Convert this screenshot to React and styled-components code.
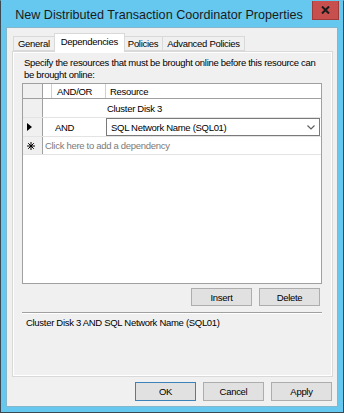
import React from "react";
import styled, { createGlobalStyle } from "styled-components";

const GlobalStyle = createGlobalStyle`
  html, body {
    margin: 0;
    padding: 0;
    background: #ffffff;
  }
  body {
    font-family: "Liberation Sans", Arial, sans-serif;
    font-size: 9.5px;
    letter-spacing: -0.3px;
    color: #000;
  }
`;

// ============ window frame ============

const Window = styled.div`
  box-sizing: border-box;
  width: 344px;
  height: 413px;
  display: flex;
  flex-direction: column;
  background-color: #66c8ef;
  border: 1px solid #3b4a52;
  border-top-color: #66c8ef;
  overflow: hidden;
`;

const TitleBar = styled.div`
  display: flex;
  align-items: flex-start;
  height: 26px;
  flex: none;
`;

const Title = styled.div`
  flex: 1;
  padding-left: 5px;
  text-align: center;
  font-size: 12.6px;
  letter-spacing: 0;
  line-height: 28px;
  color: #1b1b1b;
  white-space: nowrap;
`;

const CloseButton = styled.div`
  width: 27px;
  height: 20px;
  margin-right: 4px;
  margin-top: -1px;
  background-color: #c7504f;
  display: flex;
  align-items: center;
  justify-content: center;
  border: 1px solid #a23a39;
  border-top: none;
  box-sizing: border-box;
`;

const Client = styled.div`
  flex: 1;
  margin: 0 5px 5px;
  background-color: #f0f0f0;
  border: 1px solid #84b7cc;
  display: flex;
  flex-direction: column;
  padding: 5px 4px 0 5px;
`;

// ============ tabs ============

const TabStrip = styled.div`
  display: flex;
  align-items: flex-end;
  height: 18px;
  padding-left: 1px;
  position: relative;
  z-index: 1;
`;

const Tab = styled.div`
  box-sizing: border-box;
  height: ${(p) => (p.$active ? "19px" : "15px")};
  margin-bottom: ${(p) => (p.$active ? "-1px" : "0")};
  padding: ${(p) => (p.$active ? "2px 6px 0" : "1px 4px 0")};
  margin-left: ${(p) => (p.$active ? "-1px" : "0")};
  margin-right: ${(p) => (p.$active ? "-1px" : "0")};
  background-color: ${(p) => (p.$active ? "#ffffff" : "#f0f0f0")};
  border: 1px solid #d9d9d9;
  border-bottom: ${(p) => (p.$active ? "none" : "1px solid #d9d9d9")};
  border-left: ${(p) => (p.$first || p.$active ? "1px solid #d9d9d9" : "none")};
  line-height: 12px;
  white-space: nowrap;
  z-index: ${(p) => (p.$active ? 2 : 1)};
`;

const Panel = styled.div`
  box-sizing: border-box;
  height: 326px;
  border: 1px solid #d9d9d9;
  box-shadow: inset 1px 1px 0 #ffffff, inset -1px -1px 0 #ffffff;
  background-color: #f0f0f0;
  padding: 5px 10px 0 9px;
  display: flex;
  flex-direction: column;
`;

const Intro = styled.p`
  margin: 0 0 0 2px;
  line-height: 12px;
`;

// ============ grid ============

const Grid = styled.div`
  box-sizing: border-box;
  height: 201px;
  margin-top: 2px;
  border: 1px solid #a0a0a0;
  background-color: #ffffff;
  display: flex;
  flex-direction: column;
`;

const Row = styled.div`
  display: flex;
  height: ${(p) => p.$h}px;
  flex: none;
  border-bottom: 1px solid ${(p) => (p.$header ? "#a0a0a0" : "#e3e3e3")};
`;

const RowHead = styled.div`
  box-sizing: border-box;
  width: 20px;
  flex: none;
  background-color: #f0f0f0;
  border-right: 1px solid #a0a0a0;
  display: flex;
  align-items: center;
  padding-left: 4px;
`;

const Cell = styled.div`
  box-sizing: border-box;
  width: ${(p) => (p.$w ? `${p.$w}px` : "auto")};
  flex: ${(p) => (p.$w ? "none" : "1")};
  display: flex;
  align-items: center;
  padding-left: ${(p) => p.$pad || 0}px;
  border-right: ${(p) => (p.$line ? "1px solid #d0d0d0" : "none")};
  color: ${(p) => (p.$muted ? "#7a7a7a" : "#000")};
  white-space: nowrap;
`;

const Combo = styled.div`
  box-sizing: border-box;
  flex: 1;
  margin: 0 1px 0 0;
  border: 1px solid #7a7a7a;
  display: flex;
  align-items: center;
  justify-content: space-between;
  padding: 0 4px 0 4px;
`;

// ============ buttons ============

const ButtonRow = styled.div`
  display: flex;
  justify-content: flex-end;
  gap: ${(p) => p.$gap || 7}px;
  margin: ${(p) => p.$m};
`;

const Button = styled.div`
  box-sizing: border-box;
  width: 61px;
  height: ${(p) => p.$h || 18}px;
  background-color: #e1e1e1;
  border: 1px solid ${(p) => (p.$default ? "#3c82b8" : "#adadad")};
  display: flex;
  align-items: center;
  justify-content: center;
`;

const Separator = styled.div`
  height: 1px;
  background-color: #a0a0a0;
  border-bottom: 1px solid #ffffff;
  margin: 6px 0 0;
`;

const Summary = styled.div`
  padding: 3px 0 0 4px;
  line-height: 12px;
`;

const Footer = styled.div`
  display: flex;
  justify-content: flex-end;
  gap: 7px;
  padding: 5px 1px 0 0;
`;

const Chevron = () => (
  <svg width="8" height="5" viewBox="0 0 8 5">
    <path d="M0.5 0.5 L4 4 L7.5 0.5" fill="none" stroke="#606060" strokeWidth="1.2" />
  </svg>
);

const Arrow = () => (
  <svg width="5" height="8" viewBox="0 0 5 8">
    <path d="M0 0 L5 4 L0 8 Z" fill="#000" />
  </svg>
);

const Star = () => (
  <svg width="8" height="8" viewBox="0 0 8 8">
    <path d="M4 0 V8 M0 4 H8 M1.2 1.2 L6.8 6.8 M6.8 1.2 L1.2 6.8" stroke="#000" strokeWidth="1" />
  </svg>
);

const CloseX = () => (
  <svg width="9" height="8" viewBox="0 0 9 8">
    <path d="M1 0.5 L8 7.5 M8 0.5 L1 7.5" stroke="#1a1a1a" strokeWidth="2" />
  </svg>
);

const App = () => {
  return (
    <>
      <GlobalStyle />
      <Window>
        <TitleBar>
          <Title>New Distributed Transaction Coordinator Properties</Title>
          <CloseButton>
            <CloseX />
          </CloseButton>
        </TitleBar>
        <Client>
          <TabStrip>
            <Tab $first>General</Tab>
            <Tab $active>Dependencies</Tab>
            <Tab>Policies</Tab>
            <Tab>Advanced Policies</Tab>
          </TabStrip>
          <Panel>
            <Intro>
              Specify the resources that must be brought online before this resource can
              be brought online:
            </Intro>
            <Grid>
              <Row $h={14} $header>
                <RowHead />
                <Cell $w={9} $line />
                <Cell $w={54} $line $pad={5}>AND/OR</Cell>
                <Cell $pad={4}>Resource</Cell>
              </Row>
              <Row $h={18}>
                <RowHead />
                <Cell $w={63} />
                <Cell $pad={1}>Cluster Disk 3</Cell>
              </Row>
              <Row $h={18}>
                <RowHead>
                  <Arrow />
                </RowHead>
                <Cell $w={63} $pad={12}>AND</Cell>
                <Combo>
                  <span>SQL Network Name (SQL01)</span>
                  <Chevron />
                </Combo>
              </Row>
              <Row $h={17}>
                <RowHead>
                  <Star />
                </RowHead>
                <Cell $muted $pad={2}>Click here to add a dependency</Cell>
              </Row>
            </Grid>
            <ButtonRow $m="4px 2px 0 0">
              <Button>Insert</Button>
              <Button>Delete</Button>
            </ButtonRow>
            <Separator />
            <Summary>Cluster Disk 3 AND SQL Network Name (SQL01)</Summary>
          </Panel>
          <Footer>
            <Button $default $h={19}>OK</Button>
            <Button $h={19}>Cancel</Button>
            <Button $h={19}>Apply</Button>
          </Footer>
        </Client>
      </Window>
    </>
  );
};

export default App;
